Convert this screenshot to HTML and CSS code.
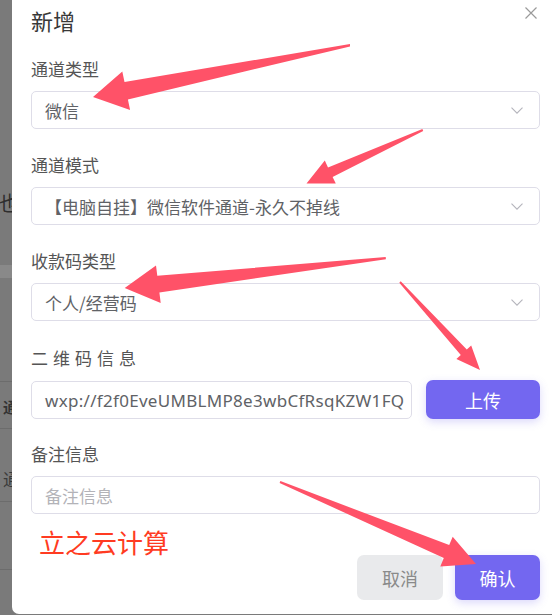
FILE: index.html
```html
<!DOCTYPE html>
<html lang="zh-CN">
<head>
<meta charset="utf-8">
<title>新增</title>
<link rel="stylesheet" href="styles.css">
</head>
<body>
<div class="page">
  <div class="backdrop">
    <div class="bg-char bg-ye">也</div>
    <div class="bg-band"></div>
    <div class="bg-line l1"></div>
    <div class="bg-char bg-tong bold">通</div>
    <div class="bg-line l2"></div>
    <div class="bg-char bg-tong2">通</div>
    <div class="bg-line l3"></div>
    <div class="bg-line l4"></div>
  </div>
  <div class="modal">
    <div class="modal-head">
      <div class="modal-title">新增</div>
      <svg class="close" width="12" height="12" viewBox="0 0 12 12"><path d="M0.5 0.5 L11.5 11.5 M11.5 0.5 L0.5 11.5" stroke="#9a9a9a" stroke-width="1.2" fill="none"/></svg>
    </div>
    <div class="form">
      <div class="item">
        <div class="label">通道类型</div>
        <div class="control select"><span>微信</span><svg class="chev" width="12" height="7" viewBox="0 0 12 7"><path d="M0.5 0.7 L6 6.2 L11.5 0.7" stroke="#b4b4bc" stroke-width="1.1" fill="none"/></svg></div>
      </div>
      <div class="item">
        <div class="label">通道模式</div>
        <div class="control select"><span>【电脑自挂】微信软件通道-永久不掉线</span><svg class="chev" width="12" height="7" viewBox="0 0 12 7"><path d="M0.5 0.7 L6 6.2 L11.5 0.7" stroke="#b4b4bc" stroke-width="1.1" fill="none"/></svg></div>
      </div>
      <div class="item">
        <div class="label">收款码类型</div>
        <div class="control select"><span>个人/经营码</span><svg class="chev" width="12" height="7" viewBox="0 0 12 7"><path d="M0.5 0.7 L6 6.2 L11.5 0.7" stroke="#b4b4bc" stroke-width="1.1" fill="none"/></svg></div>
      </div>
      <div class="item item-qr">
        <div class="label spaced">二维码信息</div>
        <div class="qr-row">
          <div class="control input latin"><span>wxp://f2f0EveUMBLMP8e3wbCfRsqKZW1FQ</span></div>
          <div class="btn btn-primary btn-upload">上传</div>
        </div>
      </div>
      <div class="item item-last">
        <div class="label">备注信息</div>
        <div class="control input"><span class="placeholder">备注信息</span></div>
      </div>
      <div class="brand">立之云计算</div>
      <div class="footer">
        <div class="btn btn-cancel">取消</div>
        <div class="btn btn-primary btn-ok">确认</div>
      </div>
    </div>
  </div>
  <svg class="arrows" width="552" height="615" viewBox="0 0 552 615">
    <g fill="#ff5268">
      <polygon points="350,44 124.5,82 122.3,71.5 93,97 130.1,110 127.9,99.5 350,46.4"/>
      <polygon points="422.4,129 328,167.4 324.8,160.6 306.5,183.5 335.8,183.5 332.6,177 423.2,131"/>
      <polygon points="385.7,257 157.3,275.8 156,265.6 124.7,288 160.7,303 159.4,292.4 385.9,259.2"/>
      <polygon points="399.3,282.7 460.8,354.9 456.4,358.9 480,370 471.2,345.5 466.8,349.5 400.7,281.3"/>
      <polygon points="279.6,482.9 443.8,558.1 440.3,566.4 476,564 452.7,536.8 449.2,545.1 280.4,481.1"/>
    </g>
  </svg>
</div>
</body>
</html>
```
FILE: styles.css
```css
* { box-sizing: border-box; }
html, body { margin: 0; padding: 0; }
body {
  width: 552px;
  height: 615px;
  overflow: hidden;
  background: #7a7a7a;
  font-family: "Noto Sans CJK SC", "Noto Sans", sans-serif;
}
.page {
  position: relative;
  display: flex;
  width: 552px;
  height: 615px;
}
.backdrop {
  width: 12px;
  flex: none;
  background: #7a7a7a;
  overflow: hidden;
  display: flex;
  flex-direction: column;
}
.bg-char {
  color: #2e2e2e;
  font-size: 20px;
  line-height: 20px;
  white-space: nowrap;
}
.bg-ye { margin-top: 193px; margin-left: -1px; }
.bg-band { margin-top: 52px; height: 13px; background: #898989; }
.bg-line { height: 1px; background: #6c6c6c; }
.l1 { margin-top: 103px; }
.bg-tong { margin-top: 17px; font-size: 15px; line-height: 15px; margin-left: 3px; color: #333; }
.bold { font-weight: 700; }
.l2 { margin-top: 14px; }
.bg-tong2 { margin-top: 41px; font-size: 17px; line-height: 17px; margin-left: 3px; color: #3a3a3a; }
.l3 { margin-top: 14px; }
.l4 { margin-top: 67px; }

.modal {
  flex: 1;
  height: 614px;
  background: #fff;
  border-bottom-left-radius: 7px;
  padding: 5px 12px 0 19px;
  display: flex;
  flex-direction: column;
}
.modal-head {
  display: flex;
  justify-content: space-between;
  align-items: flex-start;
  margin-right: -12px;
  padding-right: 15px;
}
.modal-title {
  font-size: 22px;
  line-height: 30px;
  color: #383838;
}
.close { margin-top: 2px; }
.form {
  margin-top: 23px;
  display: flex;
  flex-direction: column;
}
.item { display: flex; flex-direction: column; margin-bottom: 25px; }
.label {
  font-size: 17px;
  line-height: 22px;
  color: #555;
  margin-bottom: 11px;
}
.spaced { letter-spacing: 5px; line-height: 24px; }
.item-qr { margin-bottom: 24px; }
.item-last { margin-bottom: 0; }
.control {
  height: 38px;
  border: 1px solid #dedde8;
  border-radius: 5px;
  display: flex;
  align-items: center;
  padding: 0 16px 0 13px;
  font-size: 17px;
  color: #606266;
  overflow: hidden;
  white-space: nowrap;
}
.select { justify-content: space-between; }
.chev { flex: none; }
.qr-row { display: flex; gap: 14px; }
.qr-row .input { width: 381px; flex: none; padding-right: 6px; }
.latin { font-family: "Noto Sans", sans-serif; font-size: 17px; letter-spacing: 0.3px; }
.placeholder { color: #b3b3b8; }
.btn {
  display: flex;
  align-items: center;
  justify-content: center;
  border-radius: 7px;
  font-size: 18px;
}
.btn-primary {
  background: #7367f0;
  color: #fff;
  box-shadow: 0 3px 8px rgba(115, 103, 240, 0.25);
}
.btn-upload { flex: 1; height: 39px; margin-top: -1px; }
.brand {
  margin-top: 15px;
  font-size: 26px;
  line-height: 26px;
  color: #ff3b22;
  padding-left: 8px;
}
.footer {
  display: flex;
  justify-content: flex-end;
  gap: 12px;
}
.btn-cancel {
  width: 86px;
  height: 45px;
  background: #e9eaec;
  color: #8a8a8a;
}
.btn-ok { width: 85px; height: 45px; }
.arrows {
  position: absolute;
  top: 0;
  left: 0;
  pointer-events: none;
}
```
